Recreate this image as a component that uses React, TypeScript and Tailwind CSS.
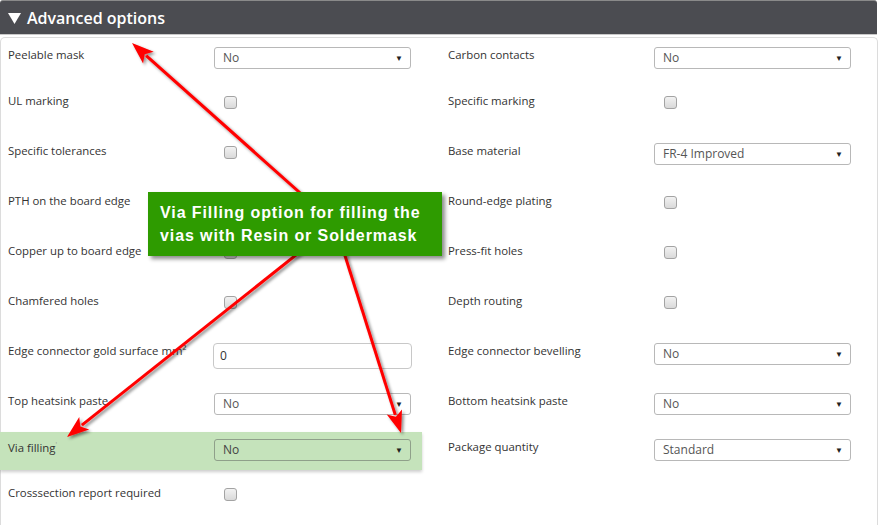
import React from "react";

type Ctl =
  | { type: "select"; value: string }
  | { type: "check" }
  | { type: "input"; value: string }
  | { type: "none" };

type Field = { label: React.ReactNode; ctl: Ctl; highlight?: boolean };
type Row = { h: string; left: Field; right: Field };

const ROWS: Row[] = [
  { h: "h-[46px]", left: { label: "Peelable mask", ctl: { type: "select", value: "No" } }, right: { label: "Carbon contacts", ctl: { type: "select", value: "No" } } },
  { h: "h-[50px]", left: { label: "UL marking", ctl: { type: "check" } }, right: { label: "Specific marking", ctl: { type: "check" } } },
  { h: "h-[50px]", left: { label: "Specific tolerances", ctl: { type: "check" } }, right: { label: "Base material", ctl: { type: "select", value: "FR-4 Improved" } } },
  { h: "h-[50px]", left: { label: "PTH on the board edge", ctl: { type: "check" } }, right: { label: "Round-edge plating", ctl: { type: "check" } } },
  { h: "h-[50px]", left: { label: "Copper up to board edge", ctl: { type: "check" } }, right: { label: "Press-fit holes", ctl: { type: "check" } } },
  { h: "h-[50px]", left: { label: "Chamfered holes", ctl: { type: "check" } }, right: { label: "Depth routing", ctl: { type: "check" } } },
  { h: "h-[50px]", left: { label: "Edge connector gold surface mm²", ctl: { type: "input", value: "0" } }, right: { label: "Edge connector bevelling", ctl: { type: "select", value: "No" } } },
  { h: "h-[46px]", left: { label: "Top heatsink paste", ctl: { type: "select", value: "No" } }, right: { label: "Bottom heatsink paste", ctl: { type: "select", value: "No" } } },
  {
    h: "h-[46px]",
    left: {
      label: (
        <>
          Via filling<span className="align-super text-[7px] text-[#9a9a9a]">'</span>
        </>
      ),
      ctl: { type: "select", value: "No" },
      highlight: true,
    },
    right: { label: "Package quantity", ctl: { type: "select", value: "Standard" } },
  },
  { h: "h-[49px]", left: { label: "Crosssection report required", ctl: { type: "check" } }, right: { label: "", ctl: { type: "none" } } },
];

function Control({ ctl, green }: { ctl: Ctl; green?: boolean }) {
  if (ctl.type === "select") {
    return (
      <div
        className={`flex h-[22px] w-[197px] items-center justify-between rounded-[3px] border pl-[8px] pr-[7px] text-[12px] ${
          green ? "mt-[7px] border-[#8fa08a] text-[#444]" : "mt-[9px] border-[#b8b8b8] bg-white text-[#555]"
        }`}
      >
        <span>{ctl.value}</span>
        <span className="text-[8px] leading-none text-[#222]">▼</span>
      </div>
    );
  }
  if (ctl.type === "input") {
    return (
      <div className="mt-[9px] ml-[-1px] flex h-[26px] w-[199px] items-center rounded-[4px] border border-[#c8c8c8] bg-white pl-[6px] text-[12px] text-[#333]">
        {ctl.value}
      </div>
    );
  }
  if (ctl.type === "check") {
    return (
      <div className="mt-[12px] ml-[10px] h-[13px] w-[13px] rounded-[3px] border border-[#a3a3a3] bg-[linear-gradient(#f2f2f2,#d9d9d9)]" />
    );
  }
  return null;
}

function Cell({ field, side }: { field: Field; side: "left" | "right" }) {
  const box = side === "left" ? "w-[439px] shrink-0 pl-[7px]" : "flex-1 pl-[8px]";
  if (field.highlight) {
    return (
      <div className="w-[439px] shrink-0">
        <div className="mt-[2px] ml-[-1px] flex h-[38px] w-[422px] bg-[#c5e3bb] pl-[8px] shadow-[0_2px_3px_rgba(0,0,0,0.2)]">
          <div className="w-[206px] pt-[5px] text-[11.4px] leading-[16px] text-[#333]">{field.label}</div>
          <Control ctl={field.ctl} green />
        </div>
      </div>
    );
  }
  return (
    <div className={`flex ${box}`}>
      <div className="w-[206px] shrink-0 pt-[9px] text-[11.4px] leading-[16px] text-[#333]">{field.label}</div>
      <Control ctl={field.ctl} />
    </div>
  );
}

const ORIGIN = { x: 335, y: 224 };
const TIPS = [
  { x: 132, y: 43 },
  { x: 67, y: 437 },
  { x: 401, y: 433 },
];

function Arrow({ tip }: { tip: { x: number; y: number } }) {
  const dx = tip.x - ORIGIN.x;
  const dy = tip.y - ORIGIN.y;
  const len = Math.hypot(dx, dy);
  const ux = dx / len;
  const uy = dy / len;
  const L = 22;
  const W = 16;
  const bx = tip.x - ux * L;
  const by = tip.y - uy * L;
  const nx = -uy * (W / 2);
  const ny = ux * (W / 2);
  return (
    <g filter="url(#sh)">
      <line x1={ORIGIN.x} y1={ORIGIN.y} x2={bx + ux * 3} y2={by + uy * 3} stroke="#ff0000" strokeWidth={3} />
      <polygon points={`${tip.x},${tip.y} ${bx + nx},${by + ny} ${bx + ux * 5},${by + uy * 5} ${bx - nx},${by - ny}`} fill="#ff0000" />
    </g>
  );
}

export default function App() {
  return (
    <div className="relative h-[525px] w-[879px] overflow-hidden bg-white font-['Open_Sans',sans-serif]">
      {/* HEADER */}
      <div className="flex h-[34px] w-[877px] items-center gap-[6px] rounded-t-[3px] border-t border-[#8a8a8a] bg-[#4b4c51] pl-[8px] text-white">
        <svg width="13" height="12" viewBox="0 0 13 12">
          <polygon points="0,1 13,1 6.5,12" fill="#fff" />
        </svg>
        <span className="text-[16px] font-semibold">Advanced options</span>
      </div>
      <div className="h-px w-[877px] bg-[#c9c9c9]" />

      {/* PANEL */}
      <div className="mt-[2px] w-[878px] rounded-t-[5px] border border-b-0 border-[#dcdcdc]">
        {ROWS.map((r, i) => (
          <div key={i} className={`flex ${r.h}`}>
            <Cell field={r.left} side="left" />
            <Cell field={r.right} side="right" />
          </div>
        ))}
      </div>

      {/* ANNOTATION */}
      <svg className="pointer-events-none absolute inset-0" width="879" height="525">
        <defs>
          <filter id="sh" x="-20%" y="-20%" width="140%" height="140%">
            <feDropShadow dx="2" dy="2" stdDeviation="1.5" floodColor="#000" floodOpacity="0.45" />
          </filter>
        </defs>
        {TIPS.map((t, i) => (
          <Arrow key={i} tip={t} />
        ))}
      </svg>
      <div className="absolute left-[148px] top-[192px] flex h-[64px] w-[294px] flex-col justify-center bg-[#2e9b00] pl-[12px] font-['Liberation_Sans',Arial,sans-serif] text-[16px] leading-[23px] font-bold tracking-[0.9px] text-white shadow-[3px_3px_4px_rgba(0,0,0,0.45)]">
        <span>Via Filling option for filling the</span>
        <span>vias with Resin or Soldermask</span>
      </div>
    </div>
  );
}
